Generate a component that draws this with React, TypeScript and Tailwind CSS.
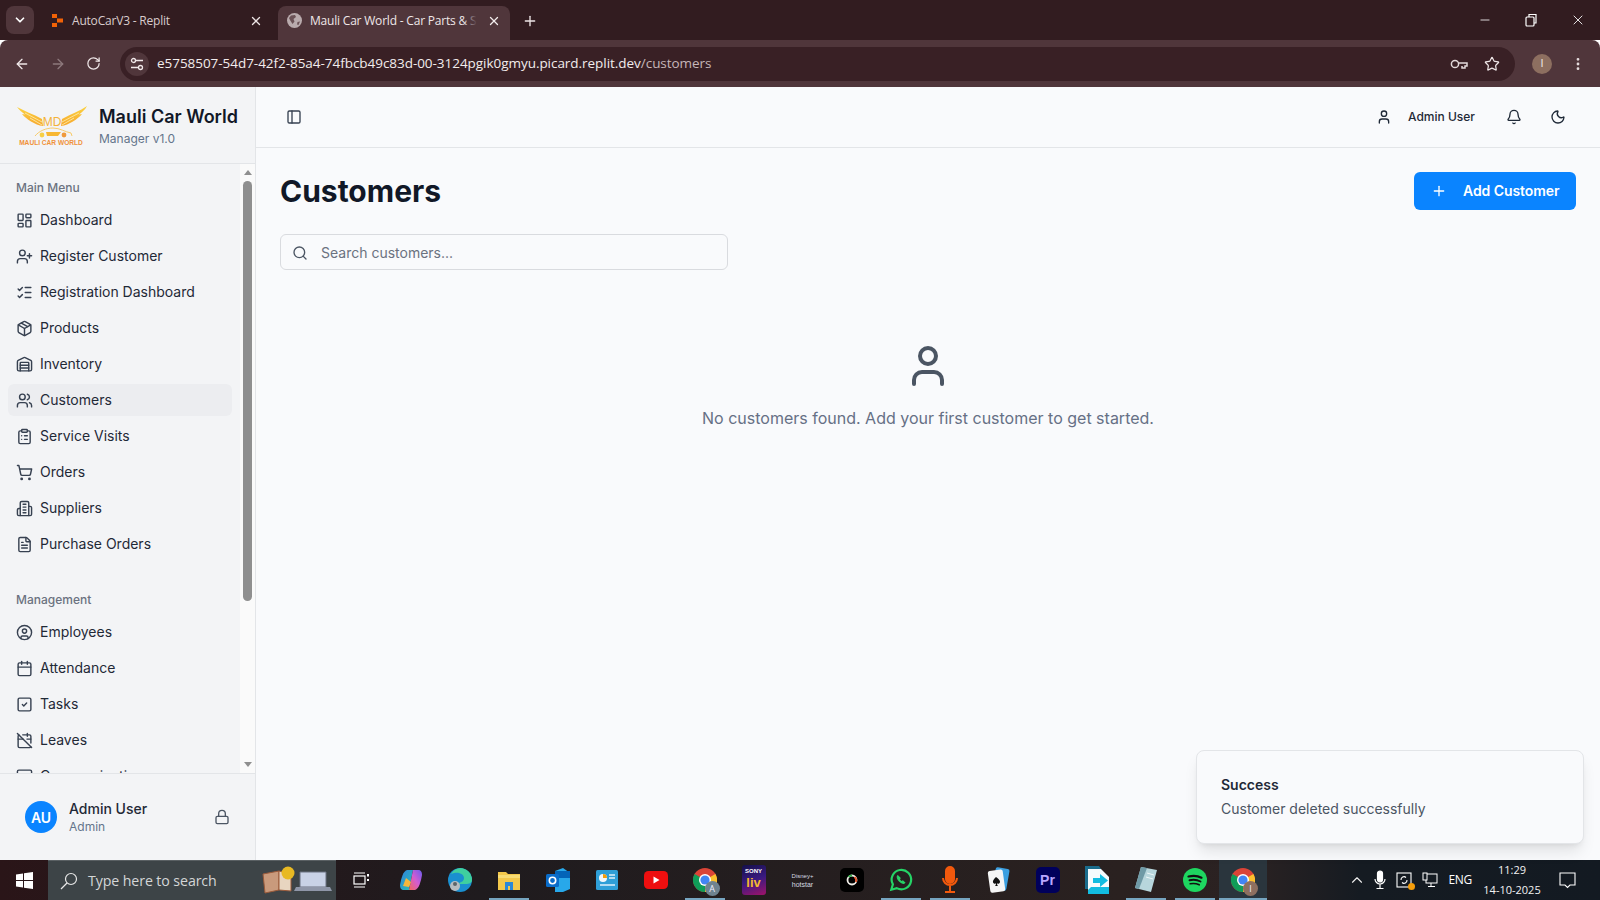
import React from "react";
import {
  LayoutDashboard, UserPlus, ListChecks, Package, Warehouse, Users, ClipboardList, ShoppingCart, FileText,
  CircleUser, Calendar, SquareCheck, CalendarOff, MessageSquare, Lock, PanelLeft, Bell, Moon, User, Plus, Search,
  ChevronDown, X, ArrowLeft, ArrowRight, RotateCw, Star, MoreVertical, Minus, ChevronUp,
} from "lucide-react";

function Building({ size = 16, className = "" }: { size?: number; strokeWidth?: number; className?: string }) {
  return (
    <svg width={size} height={size} viewBox="0 0 24 24" fill="none" stroke="currentColor" strokeWidth="2" strokeLinecap="round" strokeLinejoin="round" className={className}>
      <path d="M6 22V4a2 2 0 0 1 2-2h8a2 2 0 0 1 2 2v18Z" />
      <path d="M6 12H4a2 2 0 0 0-2 2v6a2 2 0 0 0 2 2h2" />
      <path d="M18 9h2a2 2 0 0 1 2 2v9a2 2 0 0 1-2 2h-2" />
      <path d="M10 6h4M10 10h4M10 14h4M10 18h4" />
    </svg>
  );
}

const mainMenu = [
  ["Dashboard", LayoutDashboard], ["Register Customer", UserPlus], ["Registration Dashboard", ListChecks],
  ["Products", Package], ["Inventory", Warehouse], ["Customers", Users], ["Service Visits", ClipboardList],
  ["Orders", ShoppingCart], ["Suppliers", Building], ["Purchase Orders", FileText],
] as const;
const management = [
  ["Employees", CircleUser], ["Attendance", Calendar], ["Tasks", SquareCheck], ["Leaves", CalendarOff], ["Communication", MessageSquare],
] as const;

function NavItem({ label, Icon }: { label: string; Icon: React.ComponentType<any> }) {
  const active = label === "Customers";
  return (
    <div className={`h-8 flex items-center pl-[7.5px] rounded-md text-[14px] text-[#1f2937] ${active ? "bg-[#ecedf0]" : ""}`}>
      <Icon size={17} strokeWidth={2} className="text-[#374151] shrink-0" />
      <span className="ml-[7.5px] mb-[1px]">{label}</span>
    </div>
  );
}

function Logo() {
  return (
    <svg width="70" height="42" viewBox="0 0 70 42" className="shrink-0 -mt-[2px]">
      <defs>
        <linearGradient id="wing" x1="0" y1="0" x2="0" y2="1">
          <stop offset="0" stopColor="#fbd341" />
          <stop offset="1" stopColor="#f7a72e" />
        </linearGradient>
      </defs>
      <path d="M0 2 C7 6 16 9 25 14 L26 21 C18 20 9 14 5 9 L8 9.500 C5 7 2 5 0 2Z" fill="url(#wing)" />
      <path d="M70 1 C63 6 54 9 45 14 L44 21 C52 20 61 14 65 9 L62 9.500 C65 7 68 5 70 1Z" fill="url(#wing)" />
      <path d="M8 8 L25 17 M13 13 L25 20 M62 8 L45 17 M57 13 L45 20" stroke="#fdf0b5" strokeWidth="0.8" />
      <text x="35" y="21" textAnchor="middle" fontSize="12" fontWeight="500" fill="#f3b23a" fontFamily="Liberation Sans, sans-serif">MD</text>
      <path d="M18 31 C22 26 29 23 36 23 C43 23 48 27 54 28 L55 31" fill="none" stroke="#f7c65a" strokeWidth="0.9" />
      <circle cx="25" cy="30" r="2.400" fill="#f7cf45" />
      <circle cx="47" cy="30" r="2.400" fill="#ef9a3c" />
      <path d="M29 27 L44 27 L41 31 L30 31Z" fill="#f7b733" />
      <text x="34" y="40" textAnchor="middle" fontSize="6.600" fontWeight="700" fill="#f0913a" fontFamily="Liberation Sans, sans-serif">MAULI CAR WORLD</text>
    </svg>
  );
}

function TabBar() {
  return (
    <div className="h-10 bg-[#321c20] flex items-end text-[#e9dfe0] shrink-0 font-['Open_Sans',sans-serif] text-[12px]">
      <div className="w-[28px] h-[28px] mb-[6px] ml-[6px] rounded-lg bg-[#50363b] flex items-center justify-center">
        <ChevronDown size={14} strokeWidth={3} className="text-white" />
      </div>
      <div className="w-[244px] h-[34px] flex items-center pl-[18px] pr-[15px] pb-[5px] tracking-[-0.2px]">
        <svg width="11" height="13" viewBox="0 0 11 13" className="shrink-0">
          <path d="M0 0h5v4H0zM5 4.500h6v4H5zM0 9h5v4H0z" fill="#f26207" />
        </svg>
        <span className="ml-[9px] flex-1 text-[#d9cccd]">AutoCarV3 - Replit</span>
        <X size={14} strokeWidth={2.2} className="text-[#ece4e4]" />
      </div>
      <div className="w-[232px] h-[34px] rounded-t-lg bg-[#50363b] flex items-center pl-[9px] pr-[8px] pb-[5px] tracking-[-0.2px]">
        <svg width="15" height="15" viewBox="0 0 15 15" className="shrink-0">
          <circle cx="7.500" cy="7.500" r="7.500" fill="#b9abad" />
          <path d="M4 2.500 L8 2 L9 4 L6.500 6 L7.500 8.500 L5.500 11 L3 7 L2 5Z M10.500 9 L13 8.500 L11.500 12 L10 11.500Z" fill="#6b5256" />
        </svg>
        <span className="ml-[8px] w-[167px] relative whitespace-nowrap text-[#efe7e8]">
          Mauli Car World - Car Parts &amp; S
          <span className="absolute right-0 top-0 bottom-0 w-[14px] bg-[linear-gradient(90deg,#50363b00,#50363b)]" />
        </span>
        <X size={14} strokeWidth={2.2} className="ml-[10px] text-[#f2ecec]" />
      </div>
      <div className="h-[34px] ml-[12px] pb-[5px] flex items-center"><Plus size={16} strokeWidth={2} className="text-[#eee5e6]" /></div>
      <div className="flex-1" />
      <div className="h-10 flex items-center text-white pr-[14px] gap-[32px]">
        <Minus size={14} strokeWidth={1.4} />
        <svg width="14" height="14" viewBox="0 0 14 14" fill="none" stroke="white" strokeWidth="1.2"><rect x="2" y="4" width="8" height="9" rx="1" /><path d="M5 4V1.500h7V10h-2" /></svg>
        <X size={16} strokeWidth={1.3} />
      </div>
    </div>
  );
}

function Toolbar() {
  return (
    <div className="h-[47px] bg-[#50363b] flex items-center shrink-0 rounded-t-lg text-[#e9dfe0]">
      <div className="flex items-center pl-[14px] gap-[20px] w-[120px]">
        <ArrowLeft size={16} strokeWidth={2} className="text-[#efe7e8]" />
        <ArrowRight size={16} strokeWidth={2} className="text-[#8d797c]" />
        <RotateCw size={15} strokeWidth={2} className="text-[#efe7e8]" />
      </div>
      <div className="w-[1395px] h-[34px] rounded-full bg-[#392025] flex items-center pl-[5px] pr-[15px] shrink-0">
        <div className="w-[24px] h-[24px] rounded-full bg-[#50363b] flex items-center justify-center">
          <svg width="14" height="14" viewBox="0 0 14 14" fill="none" stroke="#f0e8e9" strokeWidth="1.300">
            <circle cx="3.500" cy="3.500" r="2" /><path d="M6 3.500h7M1 10.500h7" /><circle cx="10.500" cy="10.500" r="2" />
          </svg>
        </div>
        <span className="ml-[8px] text-[13.5px] tracking-[-0.04px] font-['Open_Sans',sans-serif] flex-1 text-[#f2ecec]">
          e5758507-54d7-42f2-85a4-74fbcb49c83d-00-3124pgik0gmyu.picard.replit.dev<span className="text-[#c6b6b8]">/customers</span>
        </span>
        <svg width="18" height="12" viewBox="0 0 18 12" fill="none" stroke="#e3d9da" strokeWidth="1.500">
          <circle cx="5" cy="6" r="3.600" /><path d="M8.600 5H17v3h-2v2h-3V8" />
        </svg>
        <Star size={16} strokeWidth={1.8} className="ml-[16px] text-[#efe7e8]" />
      </div>
      <div className="w-[20px] h-[20px] rounded-full bg-[#8d6f60] text-[#f5eeee] text-[11px] flex items-center justify-center ml-[17px] font-['Open_Sans',sans-serif]">I</div>
      <MoreVertical size={16} strokeWidth={2.2} className="ml-[18px] text-[#e5dcdd]" />
    </div>
  );
}

function Sidebar() {
  return (
    <aside className="w-[256px] shrink-0 bg-[#f3f4f6] border-r border-[#e3e5e8] flex flex-col">
      <div className="h-[77px] border-b border-[#e3e5e8] flex items-center pl-[17px] pt-[3px] shrink-0">
        <Logo />
        <div className="ml-[12px]">
          <div className="text-[18px] leading-[24px] font-semibold text-[#111827] whitespace-nowrap">Mauli Car World</div>
          <div className="text-[12px] leading-[20px] text-[#64748b]">Manager v1.0</div>
        </div>
      </div>
      <div className="flex-1 flex overflow-hidden min-h-0">
        <div className="w-[240px] overflow-hidden pt-[8px] px-[8px]">
          <div className="h-8 flex items-center px-2 text-[12px] font-medium text-[#6b7280]">Main Menu</div>
          <div className="flex flex-col gap-[4px]">
            {mainMenu.map(([l, I]) => <NavItem key={l} label={l} Icon={I} />)}
          </div>
          <div className="h-8 flex items-center px-2 mt-[24px] text-[12px] font-medium text-[#6b7280]">Management</div>
          <div className="flex flex-col gap-[4px]">
            {management.map(([l, I]) => <NavItem key={l} label={l} Icon={I} />)}
          </div>
        </div>
        <div className="w-[15px] bg-[#fafafa] flex flex-col items-center shrink-0 pt-[6px] pb-[6px]">
          <div className="w-0 h-0 border-x-[4.5px] border-x-transparent border-b-[5px] border-b-[#8f8f8f]" />
          <div className="w-[9px] h-[420px] mt-[6px] rounded-full bg-[#8f8f8f]" />
          <div className="flex-1" />
          <div className="w-0 h-0 border-x-[4.5px] border-x-transparent border-t-[5px] border-t-[#8f8f8f]" />
        </div>
      </div>
      <div className="h-[87px] border-t border-[#e3e5e8] flex items-center pl-[25px] pr-[25px] shrink-0">
        <div className="w-8 h-8 rounded-full bg-[#0a84ff] text-white text-[14px] font-semibold flex items-center justify-center">AU</div>
        <div className="ml-[12px] flex-1">
          <div className="text-[14px] leading-[20px] font-medium text-[#1f2937]">Admin User</div>
          <div className="text-[12px] leading-[16px] text-[#64748b]">Admin</div>
        </div>
        <Lock size={16} strokeWidth={2} className="text-[#4b5563]" />
      </div>
    </aside>
  );
}

function Main() {
  return (
    <main className="flex-1 bg-[#f9fafc] flex flex-col min-w-0">
      <header className="h-[61px] shrink-0 border-b border-[#e3e5e8] flex items-center pl-[30px] pr-[34px]">
        <PanelLeft size={16} strokeWidth={2} className="text-[#374151]" />
        <div className="flex-1" />
        <User size={16} strokeWidth={2} className="text-[#1f2937]" />
        <span className="ml-[16px] text-[12px] font-medium text-[#1f2937]">Admin User</span>
        <Bell size={16} strokeWidth={2} className="ml-[31px] text-[#1f2937]" />
        <Moon size={16} strokeWidth={2} className="ml-[28px] text-[#1f2937]" />
      </header>
      <div className="flex-1 px-[24px] pt-[24px]">
        <div className="flex items-center justify-between h-[38px]">
          <h1 className="text-[30px] font-bold text-[#111827]">Customers</h1>
          <button className="h-[38px] w-[162px] rounded-md bg-[#0a84ff] text-white text-[14px] font-semibold tracking-[-0.08px] flex items-center pl-[17px]">
            <Plus size={16} strokeWidth={2} />
            <span className="ml-[16px] mb-[1px]">Add Customer</span>
          </button>
        </div>
        <div className="mt-[24px] w-[448px] h-[36px] rounded-md border border-[#d9dbdf] flex items-center pl-[11px]">
          <Search size={16} strokeWidth={2} className="text-[#4b5563] mt-[2px]" />
          <span className="ml-[13px] mt-[1px] text-[14px] text-[#6b7280]">Search customers...</span>
        </div>
        <div className="mt-[72px] flex flex-col items-center">
          <User size={48} strokeWidth={2} className="text-[#4b5563]" />
          <p className="mt-[16px] text-[16px] text-[#667085]">No customers found. Add your first customer to get started.</p>
        </div>
      </div>
    </main>
  );
}

function Toast() {
  return (
    <div className="absolute left-[1196px] top-[750px] w-[388px] h-[94px] rounded-lg border border-[#e3e5e8] bg-[#f9fafc] shadow-lg pl-[24px] pt-[24px]">
      <div className="text-[14px] leading-[20px] font-semibold text-[#1f2937]">Success</div>
      <div className="mt-[4px] text-[14px] leading-[20px] text-[#4b5563]">Customer deleted successfully</div>
    </div>
  );
}

function Slot({ children, w = 49, on = false, active = false }: { children: React.ReactNode; w?: number; on?: boolean; active?: boolean }) {
  return (
    <div className={`relative h-10 shrink-0 flex items-center justify-center ${active ? "bg-[#2a353d]" : ""}`} style={{ width: w }}>
      {children}
      {on && <div className={`absolute bottom-0 h-[2px] bg-[#76a5c0] ${active ? "left-0 right-0" : "left-[5px] right-[4px]"}`} />}
    </div>
  );
}

function ChromeIcon({ badge, bg }: { badge: string; bg: string }) {
  return (
    <div className="relative w-[24px] h-[24px]">
      <svg width="24" height="24" viewBox="0 0 24 24">
        <circle cx="12" cy="12" r="12" fill="#db4437" />
        <path d="M12 12 L1.600 6 A12 12 0 0 0 12 24 Z" fill="#0f9d58" />
        <path d="M12 12 L22.400 6 A12 12 0 0 1 12 24 Z" fill="#fbc02d" />
        <circle cx="12" cy="12" r="6" fill="#fff" /><circle cx="12" cy="12" r="4.600" fill="#4285f4" />
      </svg>
      <div className={`absolute -right-[3px] -bottom-[4px] w-[15px] h-[15px] rounded-full ${bg} text-[#eef] text-[9px] flex items-center justify-center font-['Open_Sans',sans-serif]`}>{badge}</div>
    </div>
  );
}

function Taskbar() {
  return (
    <div className="h-10 shrink-0 flex items-center bg-[linear-gradient(90deg,#2a1518_0%,#1f1b1e_30%,#2a2120_70%,#2b2222_78%,#151b22_85%,#131a22_100%)] text-white font-['Open_Sans',sans-serif]">
      <div className="w-[48px] h-10 flex items-center justify-center">
        <svg width="17" height="17" viewBox="0 0 17 17" fill="#fff"><path d="M0 2.400 7 1.400V8H0zM8 1.300 17 0V8H8zM0 9h7v6.600L0 14.600zM8 9h9v8L8 15.700z" /></svg>
      </div>
      <div className="w-[288px] h-10 bg-[#3d4447] border-t border-[#5a6063] flex items-center pl-[12px]">
        <svg width="18" height="18" viewBox="0 0 18 18" fill="none" stroke="#e8e8e8" strokeWidth="1.200"><circle cx="11" cy="7" r="5.500" /><path d="M7 11 L1 17" /></svg>
        <span className="ml-[10px] text-[14.2px] text-[#d4d6d7] tracking-[-0.1px]">Type here to search</span>
        <svg width="72" height="30" viewBox="0 0 72 30" className="ml-auto mr-[3px]">
          <path d="M2 8 L18 5 L18 24 L4 27Z" fill="#c99a7c" stroke="#9a5a3a" /><path d="M18 5 L30 8 L30 25 L18 24Z" fill="#e8d5c0" stroke="#9a5a3a" />
          <circle cx="27" cy="7" r="6.500" fill="#e8b923" />
          <path d="M39 6 H65 V21 H39Z" fill="#c9d2e6" stroke="#6a7080" /><path d="M35 21 H69 L71 25 H33Z" fill="#8f96a8" />
        </svg>
      </div>
      <Slot w={50}><svg width="17" height="18" viewBox="0 0 17 18" fill="none" stroke="#fff" strokeWidth="1.2"><path d="M1 2h11M1 16h11" /><rect x="1" y="5" width="11" height="8" /><path d="M15 3v2.500M15 8v2" strokeWidth="2" /></svg></Slot>
      <Slot>
        <svg width="22" height="22" viewBox="0 0 22 22">
          <defs>
            <linearGradient id="cpa" x1="0" y1="0" x2="1" y2="1"><stop offset="0" stopColor="#2f7fe0" /><stop offset="1" stopColor="#28c2b0" /></linearGradient>
            <linearGradient id="cpb" x1="0" y1="1" x2="1" y2="0"><stop offset="0" stopColor="#f0685a" /><stop offset="0.500" stopColor="#d45cd0" /><stop offset="1" stopColor="#6a5cf0" /></linearGradient>
          </defs>
          <path d="M7 1h6l-4 20H4C1 21 0 19 0 16 1 10 3 2 7 1Z" fill="url(#cpa)" />
          <path d="M15 21H9l4-20h5c3 0 4 2 4 5-1 6-3 14-7 15Z" fill="url(#cpb)" />
          <path d="M6 9 L3 17 L9 18 L11 13Z" fill="#f5b63c" />
        </svg>
      </Slot>
      <Slot>
        <svg width="24" height="24" viewBox="0 0 24 24"><circle cx="12" cy="12" r="12" fill="#1a8fd0" /><path d="M12 0a12 12 0 0 1 12 12c0 3-3 4-6 4H10c2-2 6-2 6-6S10 3 3 6a12 12 0 0 1 9-6Z" fill="#3fcf9f" /><circle cx="7" cy="18" r="5" fill="#b8bcc0" /><circle cx="7" cy="16" r="2" fill="#5d6468" /></svg>
      </Slot>
      <Slot on><svg width="22" height="20" viewBox="0 0 22 20"><path d="M0 2h8l2 2h12v16H0z" fill="#f3c84b" /><path d="M0 5h22v3H0z" fill="#f8dc74" /><path d="M7 12h8v8H7z" fill="#2b88d8" /><path d="M10 16h2v4h-2z" fill="#f3c84b" /></svg></Slot>
      <Slot>
        <svg width="24" height="24" viewBox="0 0 24 24"><path d="M9 3 L17 0 L24 5 V21 L17 24 H9Z" fill="#28a8ea" /><path d="M9 3 H24 V10 H9Z" fill="#0364b8" /><rect x="0" y="6" width="13" height="13" rx="1.500" fill="#0a6cc9" /><circle cx="6.500" cy="12.500" r="3.200" fill="none" stroke="#fff" strokeWidth="1.600" /></svg>
      </Slot>
      <Slot><svg width="22" height="20" viewBox="0 0 22 20"><rect width="22" height="20" rx="1.500" fill="#2f9fd8" /><circle cx="7" cy="8" r="4" fill="#f4f8fb" /><path d="M7 8V4a4 4 0 0 1 4 4z" fill="#f59e0b" /><path d="M13 5h6M13 8h6M4 15h15" stroke="#dff1fb" strokeWidth="1.500" /></svg></Slot>
      <Slot><svg width="24" height="18" viewBox="0 0 24 18"><rect width="24" height="18" rx="4.500" fill="#ee0f0f" /><path d="M9.500 5.500v7l6-3.500z" fill="#fff" /></svg></Slot>
      <Slot on><ChromeIcon badge="A" bg="bg-[#6f8390]" /></Slot>
      <Slot>
        <div className="w-[24px] h-[30px] rounded-[3px] bg-[linear-gradient(160deg,#14104a,#3a1a80_50%,#a0136a)] flex flex-col items-center overflow-hidden">
          <span className="text-[6px] leading-[8px] mt-[2px] font-bold text-white font-['Liberation_Sans',sans-serif]">SONY</span>
          <span className="text-[13px] leading-[16px] font-bold text-[#f5b82e] font-['Liberation_Sans',sans-serif]">liv</span>
        </div>
      </Slot>
      <Slot>
        <div className="flex flex-col items-center leading-none text-[#d6dbe0] font-['Liberation_Sans',sans-serif]">
          <span className="text-[6px]">Disney+</span>
          <span className="text-[7px] mt-[2px]">hotstar</span>
        </div>
      </Slot>
      <Slot>
        <svg width="24" height="24" viewBox="0 0 24 24"><rect width="24" height="24" rx="5" fill="#000" /><circle cx="12" cy="12" r="4.500" fill="none" stroke="#f0eee8" strokeWidth="1.800" /><path d="M14.500 9 A4.500 4.500 0 0 1 16 14" fill="none" stroke="#e6532a" strokeWidth="1.800" /><path d="M8.500 9 A4.500 4.500 0 0 1 12 7.500" fill="none" stroke="#37b24d" strokeWidth="1.800" /></svg>
      </Slot>
      <Slot on>
        <svg width="26" height="26" viewBox="0 0 24 24" fill="none" stroke="#25d366" strokeWidth="2"><path d="M3 21l1.500-5A9 9 0 1 1 8 19.500Z" /><path d="M9 8c-1 1-.5 3 1.500 5s4 2.500 5 1.500l-1.800-1.700-1.200.7c-1-.5-1.500-1-2-2l.7-1.200Z" fill="#25d366" strokeWidth="1" /></svg>
      </Slot>
      <Slot on>
        <svg width="16" height="28" viewBox="0 0 16 28" fill="none" stroke="#f2590d" strokeWidth="2"><rect x="4" y="1" width="8" height="16" rx="4" fill="#f2590d" /><path d="M1 12a7 7 0 0 0 14 0M8 20v6M3 26h10" /></svg>
      </Slot>
      <Slot>
        <svg width="24" height="28" viewBox="0 0 24 28"><rect x="7" y="2" width="14" height="22" rx="2" fill="#3b9fe0" transform="rotate(10 14 13)" /><rect x="2" y="4" width="15" height="22" rx="2" fill="#f5f5f5" transform="rotate(-8 10 15)" /><path d="M9 11c-3 3-4 5-2 6.500 1 .5 2 0 2-.5 0 1 0 2-1 3h3c-1-1-1-2-1-3 0 .5 1 1 2 .5 2-1.500 1-3.500-3-6.500Z" fill="#111" /></svg>
      </Slot>
      <Slot><div className="w-[24px] h-[26px] rounded-[5px] bg-[#00005b] text-[#b9a7ff] text-[14px] font-bold flex items-center justify-center font-['Liberation_Sans',sans-serif]">Pr</div></Slot>
      <Slot>
        <svg width="24" height="28" viewBox="0 0 24 28"><path d="M0 0h14l2 3v20H0z" fill="#1a6c8c" /><path d="M3 3h13l8 8v17H3z" fill="#f5fbfd" /><path d="M6 21h18v7H3v-4z" fill="#12bce0" /><path d="M8 12h7V8l8 6.500-8 6.500v-4H8z" fill="#12bce0" /></svg>
      </Slot>
      <Slot on>
        <svg width="22" height="26" viewBox="0 0 22 26"><path d="M6 0 L22 3 L16 25 L0 21Z" fill="#b7d6dc" /><path d="M6 0 L12 1 L4 22 L0 21Z" fill="#6f9aa6" /><path d="M12 6 L19 8 M11 10 L18 12" stroke="#eef7f9" /></svg>
      </Slot>
      <Slot on>
        <svg width="24" height="24" viewBox="0 0 24 24" fill="none" stroke="#111" strokeLinecap="round"><circle cx="12" cy="12" r="12" fill="#1ed760" stroke="none" /><path d="M5.500 8.500c4-1 9-1 13 1.200" strokeWidth="2.200" /><path d="M6.500 12.300c3.500-.8 7.500-.6 11 1.200" strokeWidth="1.900" /><path d="M7.200 15.800c3-.6 6-.4 9 1" strokeWidth="1.600" /></svg>
      </Slot>
      <Slot w={48} on active><ChromeIcon badge="I" bg="bg-[#8d6f60]" /></Slot>
      <div className="flex-1" />
      <ChevronUp size={18} strokeWidth={1.5} className="text-[#f0f0f0]" />
      <svg width="12" height="20" viewBox="0 0 12 20" fill="none" stroke="#fff" strokeWidth="1.200" className="ml-[8px]"><rect x="3.500" y="1" width="5" height="11" rx="2.500" fill="#fff" /><path d="M1 9a5 5 0 0 0 10 0M6 14v4M2.500 18.500h7" /></svg>
      <div className="relative ml-[10px]">
        <svg width="17" height="18" viewBox="0 0 17 18" fill="none" stroke="#fff" strokeWidth="1.100"><rect x="1" y="2" width="14" height="14" /><path d="M5 9a3 3 0 0 1 5-2.500M11 9a3 3 0 0 1-5 2.500" /></svg>
        <span className="absolute -right-[2px] -bottom-[1px] w-[7px] h-[7px] rounded-full bg-[#f59e0b]" />
      </div>
      <svg width="16" height="16" viewBox="0 0 16 16" fill="none" stroke="#fff" strokeWidth="1" className="ml-[9px]"><rect x="4" y="2" width="11" height="9" /><rect x="1" y="1" width="4" height="7" fill="#141b22" /><path d="M9 11v3M6 14.500h7" /></svg>
      <span className="ml-[10px] text-[12px] tracking-[-0.3px]">ENG</span>
      <div className="ml-[6px] w-[68px] text-center text-[11px] leading-[20px] text-[#f2f2f2]">
        <div>11:29</div>
        <div>14-10-2025</div>
      </div>
      <svg width="17" height="17" viewBox="0 0 17 17" fill="none" stroke="#fff" strokeWidth="1.100" className="ml-[13px] mr-[24px]"><path d="M1 1h15v12h-5l-2.500 2.500L6 13H1z" /></svg>
    </div>
  );
}

export default function App() {
  return (
    <div className="relative w-[1600px] h-[900px] overflow-hidden flex flex-col font-['Inter',sans-serif]">
      <TabBar />
      <Toolbar />
      <div className="flex-1 flex min-h-0">
        <Sidebar />
        <Main />
      </div>
      <Taskbar />
      <Toast />
    </div>
  );
}
